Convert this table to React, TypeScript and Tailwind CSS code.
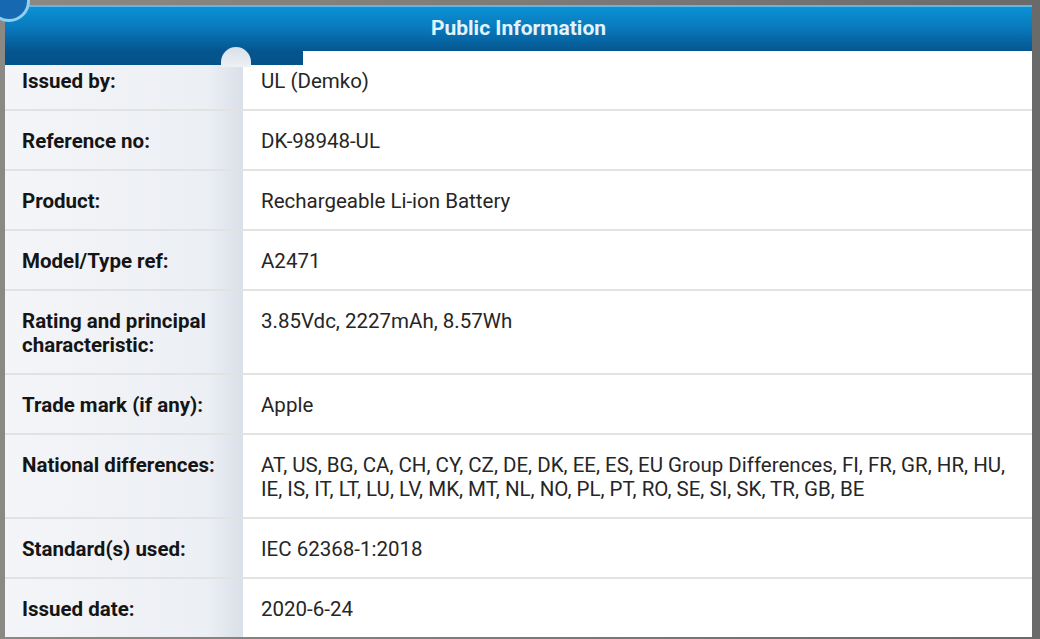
import React from "react";

const rows: { label: React.ReactNode; value: React.ReactNode }[] = [
  { label: "Issued by:", value: "UL (Demko)" },
  { label: "Reference no:", value: "DK-98948-UL" },
  { label: "Product:", value: "Rechargeable Li-ion Battery" },
  { label: "Model/Type ref:", value: "A2471" },
  {
    label: (
      <>
        Rating and principal
        <br />
        characteristic:
      </>
    ),
    value: "3.85Vdc, 2227mAh, 8.57Wh",
  },
  { label: "Trade mark (if any):", value: "Apple" },
  {
    label: "National differences:",
    value:
      "AT, US, BG, CA, CH, CY, CZ, DE, DK, EE, ES, EU Group Differences, FI, FR, GR, HR, HU, IE, IS, IT, LT, LU, LV, MK, MT, NL, NO, PL, PT, RO, SE, SI, SK, TR, GB, BE",
  },
  { label: "Standard(s) used:", value: "IEC 62368-1:2018" },
  { label: "Issued date:", value: "2020-6-24" },
];

export default function App() {
  return (
    <div
      className="relative h-[639px] w-[1040px] overflow-hidden bg-[#858380]"
      style={{ fontFamily: "Roboto, 'Liberation Sans', sans-serif" }}
    >
      <div className="absolute inset-0 bg-gradient-to-r from-[#8c8985] via-[#7d7b78] to-[#6a6a6a]" />
      <div className="relative ml-[5px] mt-[5px] flex w-[1027px] flex-col">
        {/* header */}
        <div className="flex h-[46px] items-center justify-center border-t-2 border-[#5fb6e6] bg-gradient-to-b from-[#0b92d4] via-[#0878bb] to-[#05558f]">
          <span className="text-[21px] font-bold text-[#e2f3fb]">
            Public Information
          </span>
        </div>
        {/* rows */}
        <div className="flex flex-col bg-white">
          {rows.map((r, i) => (
            <div key={i} className="flex border-b-2 border-[#e2e2e2] last:border-b-0">
              <div className="w-[238px] shrink-0 bg-gradient-to-r from-[#f4f5f8] via-[#eceff4] via-85% to-[#dae0e9] pb-[16px] pt-[18px] pl-[17px] text-[20.5px] font-bold leading-[24px] text-[#151515]">
                {r.label}
              </div>
              <div className="flex-1 pb-[16px] pt-[18px] pl-[18px] pr-[16px] text-[20.5px] leading-[24px] text-[#262626]">
                {r.value}
              </div>
            </div>
          ))}
        </div>
      </div>
      {/* header overlap artifacts */}
      <div className="absolute left-[5px] top-[50px] h-[15px] w-[298px] bg-gradient-to-b from-[#05558f] to-[#04528a]" />
      <div className="absolute left-[221px] top-[47px] h-[20px] w-[30px] rounded-t-full bg-gradient-to-b from-[#d8e0ea] to-[#eef1f5]" />
      {/* corner close button */}
      <div className="absolute left-[-12px] top-[-20px] h-[42px] w-[42px] rounded-full border-[3px] border-[#8fd0f0] bg-[#1669b0]" />
    </div>
  );
}
